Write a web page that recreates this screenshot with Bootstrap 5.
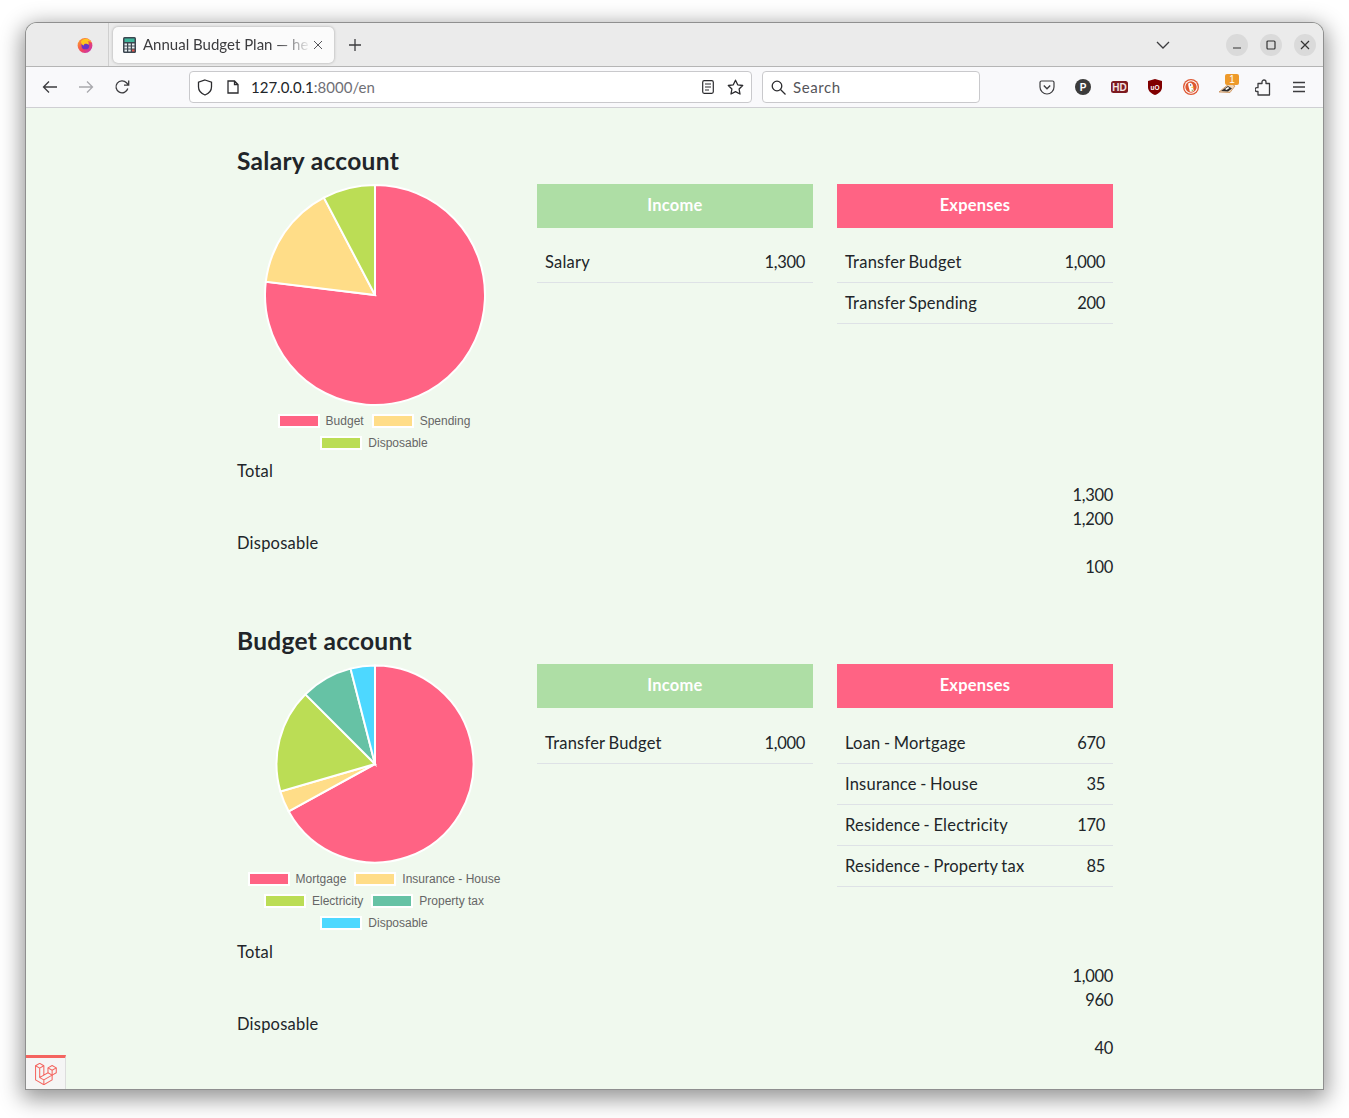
<!DOCTYPE html>
<html lang="en">
<head>
  <meta charset="UTF-8" />
  <title>Annual Budget Plan</title>
  <link href="https://cdn.jsdelivr.net/npm/bootstrap@5.3.0/dist/css/bootstrap.min.css" rel="stylesheet">
  <style>
    html, body { height: 100%; overflow: hidden; }
    body { background: #fff; font-family: Lato, "Noto Sans", sans-serif; color: #212529; }

    /* window frame */
    .win { margin: 23px 26px 0 26px; height: 1066px; border-radius: 11px 11px 0 0; overflow: hidden; position: relative;
      box-shadow: 0 0 0 1px #8f8f8f, 0 6px 22px 4px rgba(0,0,0,.42); background: #f0f9ee; }
    .win-title { height: 44px; background: #ebebeb; border-bottom: 1px solid #b5b5b5; }
    .win-side { width: 83px; height: 100%; border-right: 1px solid #cfcfcf; padding-right: 15px; }
    .win-tab { width: 221px; height: 36px; margin-left: 4px; background: #fbfbfb; border-radius: 5px; box-shadow: 0 0 3px rgba(0,0,0,.3); padding: 0 11px 0 10px; font-size: 15px; color: #3c3c3f; white-space: nowrap; }
    .win-tab-label { margin-left: 7px; -webkit-mask-image: linear-gradient(to right, #000 82%, rgba(0,0,0,.1) 100%); mask-image: linear-gradient(to right, #000 82%, rgba(0,0,0,.1) 100%); }
    .win-plus { width: 40px; margin-left: 1px; }
    .win-btns { padding-right: 7px; }
    .win-round { width: 22px; height: 22px; border-radius: 50%; background: #dadada; margin-left: 12px; }
    .win-nav { height: 41px; background: #f9f9fb; border-bottom: 1px solid #cfcfd3; padding: 0 6px; }
    .nav-slot { width: 36px; height: 36px; flex: none; }
    .url-box { height: 32px; background: #fff; border: 1px solid #c9c9cc; border-radius: 4px; font-size: 15px; }
    .url-main { width: 563px; margin-left: 49px; padding: 0 7px; }
    .url-file { margin-left: 14px; }
    .url-star { margin-left: 13px; }
    .url-search { width: 218px; margin-left: 10px; padding: 0 8px; color: #55555a; margin-right: 49px; letter-spacing: .6px; }
    .url-search span { margin-left: 7px; }
    .url-dim { color: #6f6f76; }
    .ic-badge { position: absolute; top: 5px; left: 16px; width: 14px; height: 11px; background: #ee9a2a; color: #fff; border-radius: 2px; font: 10px/11px "Liberation Sans", sans-serif; text-align: center; }

    /* page */
    .plan-page { height: 981px; padding: 39px 0 0 1px; font-size: 16.5px; line-height: 24px; letter-spacing: .22px; word-spacing: -1px; }
    .plan-wrap { max-width: 900px; }
    .plan-title { font-size: 24.5px; font-weight: 700; line-height: 28.8px; letter-spacing: .3px; margin-bottom: 8px; word-spacing: 0; }
    .plan-chart { height: 275.5px; }
    .plan-legend { font: 12px/22px "Liberation Sans", Arial, sans-serif; color: #666; letter-spacing: 0; word-spacing: 0; padding-right: 2px; }
    .legend-item { margin: 0 4px; height: 22px; }
    .legend-box { width: 42px; height: 14px; border: 2px solid #fff; margin-right: 6px; }
    .plan-head { height: 44px; line-height: 43px; margin-bottom: 14.6px; }
    .head-income { background: #aedea5; }
    .head-expense { background: #ff6384; }
    .plan-table { --bs-table-bg: transparent; --bs-table-color: #212529; border-color: #dee2e6; }
    .plan-table td.text-end, .plan-line.text-end { letter-spacing: -.3px; }
    .plan-line { height: 24px; }

    .dbg-tab { position: absolute; left: 0; bottom: 0; width: 40px; height: 34px; background: #f5f5f5; border-top: 3px solid #f4645f; border-right: 1px solid #ddd; }
  </style>
</head>
<body>
  <div class="win">
    <!-- title bar -->
    <div class="win-title d-flex align-items-center">
      <div class="win-side d-flex align-items-center justify-content-end">
        <svg width="16" height="16" viewBox="0 0 16 16">
          <defs><linearGradient id="ffx" x1="0" y1="0" x2="1" y2="1"><stop offset="0" stop-color="#ffb020"/><stop offset=".55" stop-color="#f2435f"/><stop offset="1" stop-color="#b833c8"/></linearGradient></defs>
          <circle cx="8" cy="8.5" r="7.4" fill="url(#ffx)"/>
          <circle cx="8.4" cy="8.4" r="3.9" fill="#6a35c9"/>
          <path d="M4 4.2C6 1.6 10 .8 12.6 3c1.2 1 2 2.3 2.4 3.6-1-1.6-2.6-2.5-4.4-2.6 1.2 1 1.6 2.6.8 4-.6-1.2-2-1.6-3.2-1.2C7 7 6.800 7.700 7 8.500 5 8 3.800 6.200 4 4.200z" fill="#ffc51f"/>
        </svg>
      </div>
      <div class="win-tab d-flex align-items-center">
        <svg width="13" height="16" viewBox="0 0 13 16" class="flex-none">
          <rect width="13" height="16" rx="1.5" fill="#3b4650"/>
          <rect x="1.500" y="1.500" width="10" height="3.500" fill="#3fb59b"/>
          <g fill="#e8eef0"><rect x="1.500" y="6.500" width="2.500" height="2"/><rect x="5.250" y="6.500" width="2.500" height="2"/><rect x="1.500" y="9.500" width="2.500" height="2"/><rect x="5.250" y="9.500" width="2.500" height="2"/><rect x="1.500" y="12.500" width="2.500" height="2"/><rect x="5.250" y="12.500" width="2.500" height="2"/></g>
          <rect x="9" y="6.500" width="2.500" height="2" fill="#e8eef0"/><rect x="9" y="9.500" width="2.500" height="2" fill="#e8eef0"/><rect x="9" y="12.500" width="2.500" height="2" fill="#e2574c"/>
        </svg>
        <div class="win-tab-label">Annual Budget Plan — he</div>
        <svg width="10" height="10" viewBox="0 0 10 10" class="ms-auto"><path d="M1 1l8 8M9 1l-8 8" stroke="#55555a" stroke-width="1" fill="none"/></svg>
      </div>
      <div class="win-plus d-flex justify-content-center">
        <svg width="12" height="12" viewBox="0 0 12 12"><path d="M6 0v12M0 6h12" stroke="#3c3c3f" stroke-width="1.300"/></svg>
      </div>
      <div class="win-btns ms-auto d-flex align-items-center">
        <svg width="14" height="8" viewBox="0 0 14 8" class="me-5"><path d="M1 1l6 6 6-6" stroke="#3c3c3f" stroke-width="1.300" fill="none"/></svg>
        <div class="win-round d-flex align-items-center justify-content-center ms-2"><svg width="10" height="10" viewBox="0 0 10 10"><path d="M1 8h8" stroke="#333" stroke-width="1.200"/></svg></div>
        <div class="win-round d-flex align-items-center justify-content-center"><svg width="10" height="10" viewBox="0 0 10 10"><rect x="1" y="1" width="8" height="8" rx="1" stroke="#333" stroke-width="1.200" fill="none"/></svg></div>
        <div class="win-round d-flex align-items-center justify-content-center"><svg width="10" height="10" viewBox="0 0 10 10"><path d="M1 1l8 8M9 1l-8 8" stroke="#333" stroke-width="1.200"/></svg></div>
      </div>
    </div>

    <!-- toolbar -->
    <div class="win-nav d-flex align-items-center">
      <div class="nav-slot d-flex align-items-center justify-content-center"><svg width="16" height="14" viewBox="0 0 16 14"><path d="M15 7H1.500M7 1.500L1.500 7 7 12.500" stroke="#3c3c3f" stroke-width="1.300" fill="none"/></svg></div>
      <div class="nav-slot d-flex align-items-center justify-content-center"><svg width="16" height="14" viewBox="0 0 16 14"><path d="M1 7h13.500M9 1.500L14.500 7 9 12.500" stroke="#a9a9ad" stroke-width="1.300" fill="none"/></svg></div>
      <div class="nav-slot d-flex align-items-center justify-content-center"><svg width="16" height="16" viewBox="0 0 16 16"><path d="M13.800 9.500A6 6 0 1 1 12.500 3.800L14.500 6M14.700 1.500V6.200H10" stroke="#3c3c3f" stroke-width="1.300" fill="none"/></svg></div>

      <div class="url-box url-main d-flex align-items-center">
        <svg width="16" height="17" viewBox="0 0 16 17"><path d="M8 1l6.500 2.200V8c0 3.800-2.800 6.500-6.500 8C4.300 14.500 1.500 11.800 1.500 8V3.200z" stroke="#2b2b2e" stroke-width="1.300" fill="none"/></svg>
        <svg width="12" height="14" viewBox="0 0 12 14" class="url-file"><path d="M1 1h6.500L11 4.500V13H1zM7.500 1v3.500H11" stroke="#2b2b2e" stroke-width="1.300" fill="none"/></svg>
        <div class="ms-2 ps-1"><span>127.0.0.1</span><span class="url-dim">:8000/en</span></div>
        <svg width="12" height="14" viewBox="0 0 12 14" class="ms-auto"><rect x=".700" y=".700" width="10.600" height="12.600" rx="1.500" stroke="#2b2b2e" stroke-width="1.200" fill="none"/><path d="M3 4h6M3 7h6M3 10h4" stroke="#2b2b2e" stroke-width="1.200"/></svg>
        <svg width="17" height="16" viewBox="0 0 17 16" class="url-star"><path d="M8.500 1.200l2.200 4.600 5 .7-3.600 3.500.9 5-4.500-2.400L4 15l.9-5L1.300 6.500l5-.7z" stroke="#2b2b2e" stroke-width="1.300" fill="none" stroke-linejoin="round"/></svg>
      </div>

      <div class="url-box url-search d-flex align-items-center">
        <svg width="15" height="15" viewBox="0 0 15 15"><circle cx="6" cy="6" r="4.800" stroke="#2b2b2e" stroke-width="1.300" fill="none"/><path d="M9.500 9.500l5 5" stroke="#2b2b2e" stroke-width="1.300"/></svg>
        <span>Search</span>
      </div>

      <div class="nav-slot d-flex align-items-center justify-content-center"><svg width="16" height="15" viewBox="0 0 16 15"><path d="M2.500 1h11A1.500 1.500 0 0 1 15 2.500V7a7 7 0 0 1-14 0V2.500A1.500 1.500 0 0 1 2.500 1z" stroke="#3c3c3f" stroke-width="1.200" fill="none"/><path d="M4.800 5.500L8 8.700l3.200-3.200" stroke="#3c3c3f" stroke-width="1.400" fill="none"/></svg></div>
      <div class="nav-slot d-flex align-items-center justify-content-center"><svg width="16" height="16" viewBox="0 0 16 16"><circle cx="8" cy="8" r="8" fill="#3b3b3b"/><text x="8" y="11.500" text-anchor="middle" font-family="Liberation Sans" font-weight="700" font-size="10" fill="#fff">P</text></svg></div>
      <div class="nav-slot d-flex align-items-center justify-content-center"><svg width="17" height="12" viewBox="0 0 17 12"><rect width="17" height="12" rx="2.500" fill="#7d1a20"/><text x="8.500" y="9.800" text-anchor="middle" font-family="Liberation Sans" font-weight="700" font-size="10" fill="#f4e3e3">HD</text></svg></div>
      <div class="nav-slot d-flex align-items-center justify-content-center"><svg width="14" height="16" viewBox="0 0 14 16"><path d="M7 0l7 2v6c0 4-3 6.500-7 8-4-1.500-7-4-7-8V2z" fill="#800000"/><text x="7" y="10.500" text-anchor="middle" font-family="Liberation Sans" font-weight="700" font-size="6.500" fill="#fff">uO</text></svg></div>
      <div class="nav-slot d-flex align-items-center justify-content-center"><svg width="16" height="16" viewBox="0 0 16 16"><circle cx="8" cy="8" r="8" fill="#de5833"/><circle cx="8" cy="8" r="6.700" fill="#fff"/><circle cx="8" cy="8" r="5.700" fill="#de5833"/><path d="M5.200 4.400c1.800-1.300 4.300-.5 4.600 1.800.2 1.500.6 4 1 5.800-1.200.8-3 1-4 .6C6.500 10 4.900 6.500 5.200 4.400z" fill="#fff"/><circle cx="7.600" cy="6" r=".7" fill="#2d4f8e"/><path d="M7.500 8.300l3-.8v1.600z" fill="#f5c518"/><path d="M8.500 10.500l1.800.5-1.300 1.200z" fill="#5fb832"/></svg></div>
      <div class="nav-slot position-relative d-flex align-items-center justify-content-center">
        <svg width="18" height="14" viewBox="0 0 18 14"><path d="M1 12L12 3l5 3-5 6.500z" fill="#f0d6b8" stroke="#c98d54" stroke-width=".800"/><path d="M3 11l7-5 4 2.500-4 3z" fill="#2b2b2b"/><path d="M7 9l3-2 1.500 1-3 2z" fill="#fff"/></svg>
        <span class="ic-badge">1</span>
      </div>
      <div class="nav-slot d-flex align-items-center justify-content-center"><svg width="16" height="17" viewBox="0 0 16 17"><path d="M7 4.500V3a2 2 0 0 1 4 0v1.500h3.500V16H3v-3.500H2a1.900 1.900 0 0 1 0-3.800h1V4.500z" stroke="#3c3c3f" stroke-width="1.300" fill="none" stroke-linejoin="round"/></svg></div>
      <div class="nav-slot d-flex align-items-center justify-content-center"><svg width="14" height="12" viewBox="0 0 14 12"><path d="M1 1.500h12M1 6h12M1 10.500h12" stroke="#3c3c3f" stroke-width="1.300"/></svg></div>
    </div>

    <!-- page -->
    <div class="plan-page">
      <div class="container plan-wrap">

        <section class="mb-5">
          <h3 class="plan-title">Salary account</h3>
          <div class="row">
            <div class="col-4">
              <div class="plan-chart" data-height="226" data-r="110" data-cy="111" data-values="1000,200,100" data-labels="Budget|Spending|Disposable" data-breaks="2"></div>
            </div>
            <div class="col-4">
              <div class="plan-head head-income text-white fw-bold text-center">Income</div>
              <table class="table plan-table mb-0"><tbody>
                <tr><td>Salary</td><td class="text-end">1,300</td></tr>
              </tbody></table>
            </div>
            <div class="col-4">
              <div class="plan-head head-expense text-white fw-bold text-center">Expenses</div>
              <table class="table plan-table mb-0"><tbody>
                <tr><td>Transfer Budget</td><td class="text-end">1,000</td></tr>
                <tr><td>Transfer Spending</td><td class="text-end">200</td></tr>
              </tbody></table>
            </div>
          </div>
          <div class="plan-line">Total</div>
          <div class="plan-line text-end">1,300</div>
          <div class="plan-line text-end">1,200</div>
          <div class="plan-line">Disposable</div>
          <div class="plan-line text-end">100</div>
        </section>

        <section>
          <h3 class="plan-title">Budget account</h3>
          <div class="row">
            <div class="col-4">
              <div class="plan-chart" data-height="204" data-r="98.500" data-cy="100" data-values="670,35,170,85,40" data-labels="Mortgage|Insurance - House|Electricity|Property tax|Disposable" data-breaks="2,4"></div>
            </div>
            <div class="col-4">
              <div class="plan-head head-income text-white fw-bold text-center">Income</div>
              <table class="table plan-table mb-0"><tbody>
                <tr><td>Transfer Budget</td><td class="text-end">1,000</td></tr>
              </tbody></table>
            </div>
            <div class="col-4">
              <div class="plan-head head-expense text-white fw-bold text-center">Expenses</div>
              <table class="table plan-table mb-0"><tbody>
                <tr><td>Loan - Mortgage</td><td class="text-end">670</td></tr>
                <tr><td>Insurance - House</td><td class="text-end">35</td></tr>
                <tr><td>Residence - Electricity</td><td class="text-end">170</td></tr>
                <tr><td>Residence - Property tax</td><td class="text-end">85</td></tr>
              </tbody></table>
            </div>
          </div>
          <div class="plan-line">Total</div>
          <div class="plan-line text-end">1,000</div>
          <div class="plan-line text-end">960</div>
          <div class="plan-line">Disposable</div>
          <div class="plan-line text-end">40</div>
        </section>

      </div>
    </div>

    <!-- debugbar tab -->
    <div class="dbg-tab d-flex align-items-center justify-content-center">
      <svg width="22" height="22" viewBox="0 0 50 51" fill="none" stroke="#f4645f" stroke-width="2.400" stroke-linejoin="round">
        <path d="M.8 6.300L10.400.8 20 6.300V28.200L29.600 22.700V11.300L39.200 5.800 48.800 11.300V22.700L39.200 28.200V39.200L20 50.300.8 39.200z"/>
        <path d="M.8 6.300L10.400 11.900 20 6.300M10.400 11.900V33.900L20 39.200V50.300M20 39.200L39.200 28.200 29.600 22.700M10.400 33.700L20 28.200"/>
        <path d="M29.600 11.300L39.200 16.800 48.800 11.300M39.200 16.800V28.200"/>
      </svg>
    </div>
  </div>

  <script src="https://cdn.jsdelivr.net/npm/bootstrap@5.3.0/dist/js/bootstrap.bundle.min.js"></script>
  <script>
    // same colours on every chart, in slice order
    const COLORS = ['#ff6384', '#ffdd88', '#bbdd55', '#66c2a5', '#4dd8ff'];

    document.querySelectorAll('.plan-chart').forEach(function (el) {
      const values = el.dataset.values.split(',').map(Number);
      const labels = el.dataset.labels.split('|');
      const breaks = el.dataset.breaks.split(',').map(Number);
      const total = values.reduce((a, b) => a + b, 0);
      const r = +el.dataset.r, cy = +el.dataset.cy, cx = 138;

      let angle = -Math.PI / 2;
      let paths = '';
      values.forEach(function (v, i) {
        const next = angle + v / total * Math.PI * 2;
        const big = next - angle > Math.PI ? 1 : 0;
        const x1 = cx + r * Math.cos(angle), y1 = cy + r * Math.sin(angle);
        const x2 = cx + r * Math.cos(next), y2 = cy + r * Math.sin(next);
        paths += `<path d="M${cx} ${cy}L${x1} ${y1}A${r} ${r} 0 ${big} 1 ${x2} ${y2}Z" fill="${COLORS[i]}" stroke="#fff" stroke-width="2"/>`;
        angle = next;
      });

      let legend = '';
      let row = '';
      labels.forEach(function (label, i) {
        row += `<div class="legend-item d-flex align-items-center"><span class="legend-box" style="background:${COLORS[i]}"></span>${label}</div>`;
        if (breaks.includes(i + 1) || i === labels.length - 1) {
          legend += `<div class="d-flex justify-content-center">${row}</div>`;
          row = '';
        }
      });

      el.innerHTML = `<svg width="276" height="${el.dataset.height}" class="d-block">${paths}</svg><div class="plan-legend">${legend}</div>`;
    });
  </script>
</body>
</html>
